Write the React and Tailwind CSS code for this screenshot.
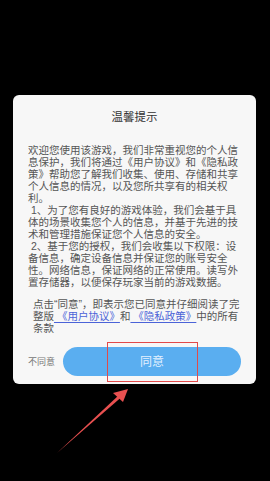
const lines1 = [
  '欢迎您使用该游戏，我们非常重视您的个人信',
  '息保护，我们将通过《用户协议》和《隐私政',
  '策》帮助您了解我们收集、使用、存储和共享',
  '个人信息的情况，以及您所共享有的相关权',
  '利。',
  ' 1、为了您有良好的游戏体验，我们会基于具',
  '体的场景收集您个人的信息，并基于先进的技',
  '术和管理措施保证您个人信息的安全。',
  ' 2、基于您的授权，我们会收集以下权限：设',
  '备信息，确定设备信息并保证您的账号安全',
  '性。网络信息，保证网络的正常使用。读写外',
  '置存储器，以便保存玩家当前的游戏数据。',
];

const font = { fontFamily: '"Liberation Sans", "Noto Sans CJK SC", sans-serif' };

export default function App() {
  return (
    <div className="relative w-[270px] h-[481px] bg-black overflow-hidden" style={font}>
      <div className="pt-[95px] px-[13px]">
        <div className="relative w-[243px] bg-[#f7f7f7] rounded-[6px] pt-[15px] pb-[8px] px-[15px]">
          <div className="text-center text-[11.5px] leading-[14px] text-[#333]">温馨提示</div>

          <div className="mt-[20px] text-[10.5px] leading-[12px] text-[#555] whitespace-pre">
            {lines1.map((l, i) => (
              <div key={i}>{l}</div>
            ))}
          </div>

          <div className="mt-[10px] pl-[5px] text-[10.5px] leading-[12px] text-[#555] whitespace-pre">
            <div>点击“同意”，即表示您已同意并仔细阅读了完</div>
            <div>
              整版<span className="text-[#4b63d8] underline underline-offset-2"> 《用户协议》</span>和<span className="text-[#4b63d8] underline underline-offset-2"> 《隐私政策》</span>中的所有
            </div>
            <div>条款</div>
          </div>

          <div className="mt-[13px] flex items-center gap-[8px]">
            <span className="text-[9px] leading-[12px] text-[#777] whitespace-nowrap">不同意</span>
            <button className="w-[178px] h-[29px] rounded-full bg-[#5aaef0] text-[#e3f1ff] text-[12px] flex items-center justify-center">
              同意
            </button>
          </div>

          {/* red highlight box */}
          <div className="absolute left-[94px] top-[247px] w-[91px] h-[40px] border-[1.5px] border-[#e14a4a]" />
        </div>
      </div>

      {/* arrow */}
      <svg className="absolute left-0 top-0" width="270" height="481" viewBox="0 0 270 481">
        <polygon points="57,453 119,395 121,397.5" fill="#e85050" />
        <polygon points="128,389 113,393 123,402" fill="#e85050" />
      </svg>
    </div>
  );
}
